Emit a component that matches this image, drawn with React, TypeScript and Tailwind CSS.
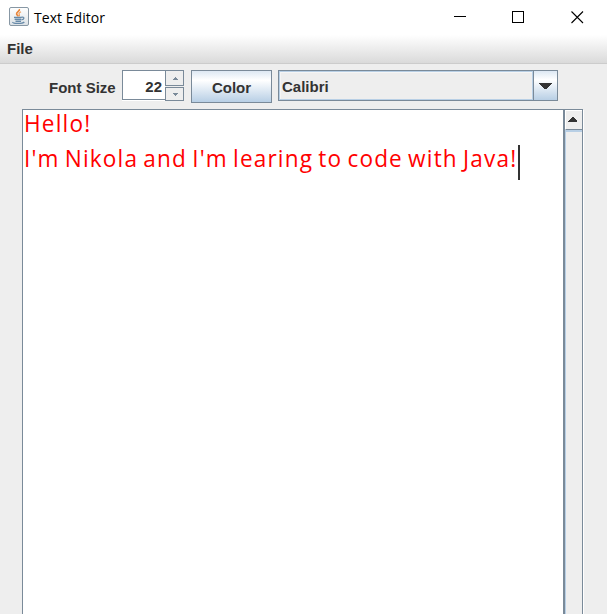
import React from "react";

function JavaIcon() {
  return (
    <svg width="20" height="19" viewBox="0 0 20 19" fill="none">
      <defs>
        <linearGradient id="tile" x1="0" y1="0" x2="0" y2="1">
          <stop offset="0" stopColor="#ffffff" />
          <stop offset="1" stopColor="#dce2e6" />
        </linearGradient>
      </defs>
      <rect x="0.5" y="0.5" width="19" height="18" rx="1.5" fill="url(#tile)" stroke="#8797a4" />
      <path d="M10.3 2.2C11.3 4.2 7 5 7.6 7.2C7.8 8.2 9 8.6 9.3 9.4" stroke="#e8853a" strokeWidth="1.7" />
      <path d="M12 4.8C9.5 6 9.7 7 10.4 7.7C10.8 8.4 10.2 9 9.8 9.4" stroke="#efa05f" strokeWidth="1.2" />
      <path d="M5 10.4H12.8M5.6 12.3H12.3M6.5 14.2H12" stroke="#6689a8" strokeWidth="1.4" />
      <path d="M12.5 10.3C15.8 9.5 15.6 12.4 12.4 13" stroke="#6689a8" strokeWidth="1.2" />
      <path d="M3.6 15C3.2 16.9 13.5 17 15.3 15" stroke="#6689a8" strokeWidth="1.3" />
    </svg>
  );
}

function Arrow({ down = false }: { down?: boolean }) {
  return (
    <svg width="6" height="3" viewBox="0 0 6 3" shapeRendering="crispEdges">
      <path d={down ? "M0 0H6L3 3Z" : "M0 3H6L3 0Z"} fill="#7a8a99" />
    </svg>
  );
}

function TitleBar() {
  return (
    <header className="flex h-[35px] items-start bg-white">
      <div className="flex flex-1 pt-[7px] pl-[9px]">
        <JavaIcon />
        <span className="ml-[5px] font-['Open_Sans',sans-serif] text-[14px] leading-[21px] tracking-[0.05px] text-black">Text Editor</span>
      </div>
      <svg width="130" height="14" viewBox="0 0 130 14" className="mt-[10px] mr-[23px]" fill="none" stroke="black">
        <path d="M0 6.5H12" shapeRendering="crispEdges" />
        <rect x="58.5" y="1.5" width="11" height="11" shapeRendering="crispEdges" />
        <path d="M117.5 1.5L129 13M129 1.5L117.5 13" strokeWidth="1.1" />
      </svg>
    </header>
  );
}

function Toolbar() {
  return (
    <div className="flex h-[45px] items-start pt-[6px] text-[15px] font-bold text-[#333333]">
      <span className="ml-[49px] w-[73px] leading-[36px]">Font Size</span>
      <div className="flex h-[31px] w-[62px]">
        <div className="flex h-[30px] w-[43px] items-center justify-end border border-r-0 border-[#7a8a99] bg-white pt-[5px] pr-[3px] shadow-[0_1px_0_white]">22</div>
        <div className="flex w-[19px] flex-col gap-px">
          <div className="flex h-[16px] items-center justify-center border border-[#7a8a99]"><Arrow /></div>
          <div className="flex h-[14px] items-center justify-center border border-[#7a8a99]"><Arrow down /></div>
        </div>
      </div>
      <button className="ml-[7px] flex h-[33px] w-[81px] items-center justify-center border border-[#7a8a99] bg-linear-to-b from-[#dde8f3] via-white via-30% to-[#b8cfe5] pt-[3px]">Color</button>
      <div className="ml-[6px] flex h-[31px] w-[280px] border border-[#7a8a99]">
        <div className="flex flex-1 items-center border border-[#b8cfe5] pt-[3px] pl-[2px] shadow-[inset_1px_1px_0_#f5f5f5]">Calibri</div>
        <div className="flex w-[24px] items-center justify-center border-l border-[#7a8a99] bg-linear-to-b from-[#dde8f3] via-white via-30% to-[#b8cfe5]">
          <svg width="13" height="6" viewBox="0 0 13 6" shapeRendering="crispEdges"><path d="M0 0H13L7.5 6H5.5Z" fill="#333" /></svg>
        </div>
      </div>
    </div>
  );
}

export default function App() {
  return (
    <div className="flex h-[614px] w-[607px] flex-col overflow-hidden bg-[#eeeeee] font-['Liberation_Sans',Arial,sans-serif]">
      <TitleBar />
      <nav className="h-[29px] border-b border-[#cccccc] bg-linear-to-b from-white to-[#dadada] pl-[7px] text-[15px] leading-[28px] font-bold text-[#333333]">File</nav>
      <Toolbar />
      <main className="mr-[24px] ml-[22px] flex flex-1 border-t border-l border-[#7a8a99]">
        <div className="flex-1 bg-white pl-px font-['Open_Sans',sans-serif] text-[24px] leading-[35px] tracking-[1.25px] whitespace-nowrap text-[#ff0000] [word-spacing:-2px]">
          <p className="-mt-[5px] origin-left scale-x-94">Hello!</p>
          <div className="flex">
            <p className="w-[494px] origin-left scale-x-94">I'm Nikola and I'm learing to code with Java!</p>
            <i className="mt-[5px] h-[35px] w-[2px] bg-[#333333]" />
          </div>
        </div>
        <div className="flex w-[20px] flex-col border-r border-l-2 border-[#7a8a99] shadow-[1px_0_0_white]">
          <div className="flex h-[20px] items-start border-t border-b border-l border-t-white border-b-[#7a8a99] border-l-white pt-[6px] pl-[2px]">
            <svg width="9" height="5" viewBox="0 0 9 5" shapeRendering="crispEdges"><path d="M0 5V4L4 0H5L9 4V5Z" fill="#333" /></svg>
          </div>
          <div className="flex-1 border-t-2 border-l border-[#b8cfe5]" />
        </div>
      </main>
    </div>
  );
}
